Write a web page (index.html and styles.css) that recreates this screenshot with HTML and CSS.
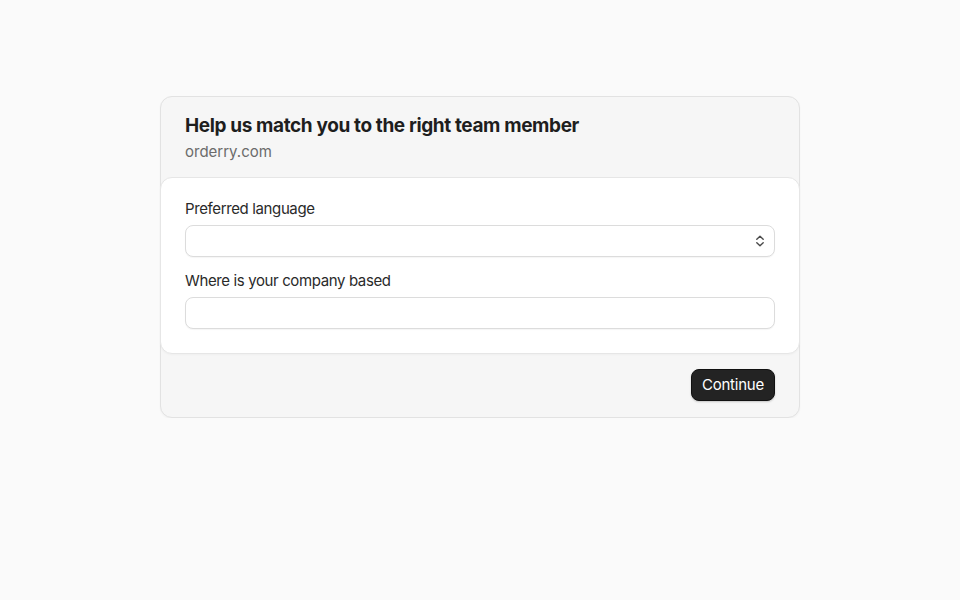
FILE: index.html
```html
<!DOCTYPE html>
<html lang="en">
<head>
<meta charset="utf-8">
<title>Help us match you</title>
<link rel="stylesheet" href="styles.css">
</head>
<body>
<main class="page">
  <form class="card">
    <header class="card-head">
      <h1 class="title">Help us match you to the right team member</h1>
      <p class="subtitle">orderry.com</p>
    </header>
    <section class="panel">
      <div class="field">
        <label class="label" for="lang">Preferred language</label>
        <div class="select-wrap">
          <select id="lang" class="control select"><option></option></select>
          <svg class="chev" width="10" height="14" viewBox="0 0 10 14" aria-hidden="true">
            <path d="M1.8 5.3 L5 2.2 L8.2 5.3 M1.8 8.7 L5 11.8 L8.2 8.7" fill="none" stroke="#4a4a4a" stroke-width="1.4" stroke-linecap="round" stroke-linejoin="round"/>
          </svg>
        </div>
      </div>
      <div class="field">
        <label class="label" for="loc">Where is your company based</label>
        <input id="loc" class="control" type="text">
      </div>
    </section>
    <footer class="card-foot">
      <button type="button" class="btn">Continue</button>
    </footer>
  </form>
</main>
</body>
</html>
```
FILE: styles.css
```css
* { box-sizing: border-box; }
html, body { margin: 0; padding: 0; }
body {
  background: #fafafa;
  font-family: Inter, "Noto Sans", sans-serif;
  color: #1f1f1f;
}
.page {
  display: flex;
  justify-content: center;
  padding-top: 96px;
}
.card {
  width: 640px;
  background: #f6f6f6;
  border: 1px solid #e2e2e2;
  border-radius: 12px;
  box-shadow: 0 1px 2px rgba(0,0,0,0.04);
  margin: 0;
}
.card-head {
  padding: 17px 24px 15px;
}
.title {
  margin: 0;
  font-size: 19px;
  line-height: 24px;
  font-weight: 700;
  letter-spacing: -0.02em;
  color: #1e1e1e;
}
.subtitle {
  margin: 4px 0 0;
  font-size: 15px;
  line-height: 20px;
  color: #6b6b6b;
}
.panel {
  background: #fff;
  border: 1px solid #e6e6e6;
  border-radius: 12px;
  margin: 0 -1px;
  padding: 20px 24px 24px;
  display: flex;
  flex-direction: column;
  gap: 13px;
  box-shadow: 0 1px 2px rgba(0,0,0,0.03);
}
.field {
  display: flex;
  flex-direction: column;
  gap: 6px;
}
.label {
  font-size: 15px;
  line-height: 21px;
  color: #2a2a2a;
  letter-spacing: -0.025em;
}
.control {
  width: 100%;
  height: 32px;
  border: 1px solid #dcdcdc;
  border-radius: 8px;
  background: #fff;
  font: inherit;
  font-size: 15px;
  padding: 0 12px;
  box-shadow: 0 1px 1px rgba(0,0,0,0.04);
  outline: none;
}
.select-wrap { position: relative; }
.select {
  appearance: none;
  -webkit-appearance: none;
  display: block;
}
.chev {
  position: absolute;
  right: 10px;
  top: 9px;
  pointer-events: none;
}
.card-foot {
  display: flex;
  justify-content: flex-end;
  padding: 15px 24px 16px;
}
.btn {
  height: 32px;
  padding: 0 10px 1px;
  border: 1px solid #111;
  border-radius: 8px;
  background: #232323;
  color: #fff;
  font: inherit;
  font-size: 15px;
  letter-spacing: -0.015em;
  box-shadow: 0 1px 2px rgba(0,0,0,0.2);
}
```
